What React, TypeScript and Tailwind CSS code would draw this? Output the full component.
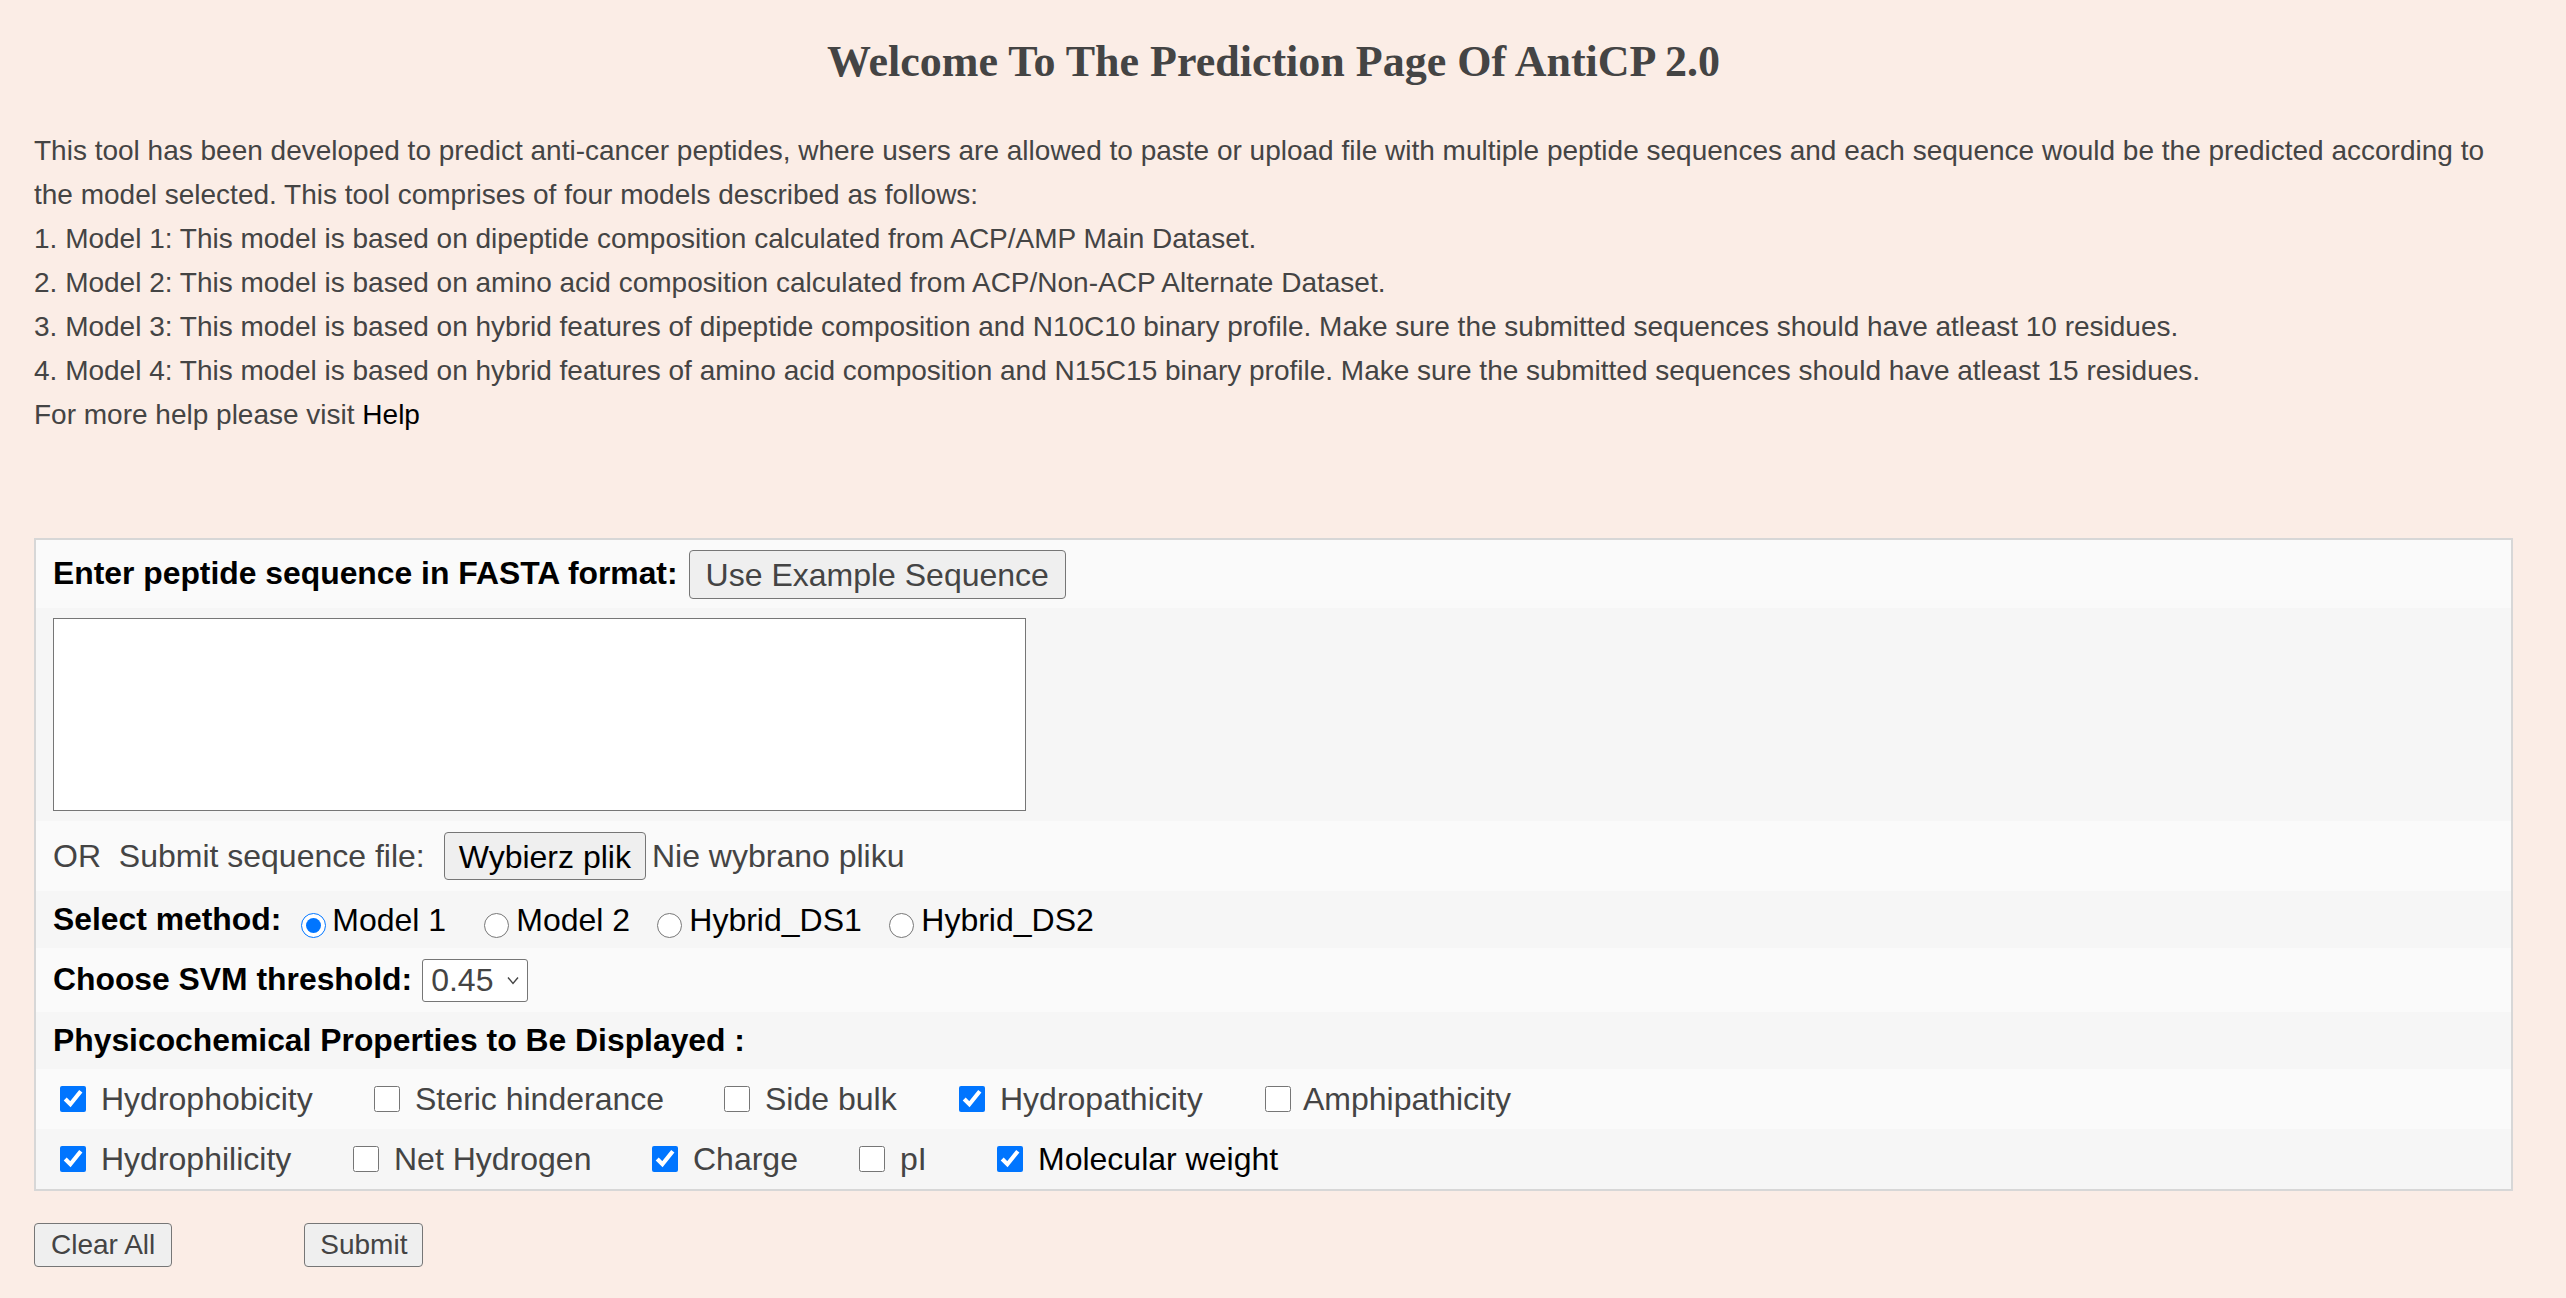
import React from "react";

const sans = "font-['Liberation_Sans',Arial,Helvetica,sans-serif]";

function Radio({ label, checked, width, gap }: { label: string; checked?: boolean; width?: string; gap: string }) {
  return (
    <label className={`flex items-center ${width ?? ""}`}>
      <input type="radio" name="method" defaultChecked={checked} className="mt-[12px] h-[25px] w-[25px] shrink-0" />
      <span className={`${gap} text-black`}>{label}</span>
    </label>
  );
}

function Check({
  label,
  checked,
  width,
  black,
  gap = "ml-[15px]",
}: {
  label: string;
  checked?: boolean;
  width?: string;
  black?: boolean;
  gap?: string;
}) {
  return (
    <label className={`flex items-center ${width ?? ""}`}>
      <input type="checkbox" defaultChecked={checked} className="h-[26px] w-[26px] shrink-0" />
      <span className={`${gap} ${black ? "text-black" : "text-[#444]"}`}>{label}</span>
    </label>
  );
}

export default function App() {
  return (
    <div className={`min-h-screen w-full bg-[#fbede6] ${sans} text-[#444]`}>
      <div className="pl-[34px] pr-[53px] pb-[31px]">
        <h1 className="pt-[37px] text-center font-['Liberation_Serif','Times_New_Roman',serif] text-[44px] font-bold leading-[50px] text-[#444]">
          Welcome To The Prediction Page Of AntiCP 2.0
        </h1>
        <p className="mt-[41.5px] text-[28px] leading-[44px]">
          This tool has been developed to predict anti-cancer peptides, where users are allowed to paste or upload file with multiple peptide sequences and each sequence would be the predicted according to the model selected. This tool comprises of four models described as follows:
          <br />
          1. Model 1: This model is based on dipeptide composition calculated from ACP/AMP Main Dataset.
          <br />
          2. Model 2: This model is based on amino acid composition calculated from ACP/Non-ACP Alternate Dataset.
          <br />
          3. Model 3: This model is based on hybrid features of dipeptide composition and N10C10 binary profile. Make sure the submitted sequences should have atleast 10 residues.
          <br />
          4. Model 4: This model is based on hybrid features of amino acid composition and N15C15 binary profile. Make sure the submitted sequences should have atleast 15 residues.
          <br />
          For more help please visit <a className="text-black">Help</a>
        </p>

        <div className="mt-[101.5px] border-2 border-[#d7d7d7] text-[32px]">
          <div className="flex h-[68px] items-center bg-[#fafafa] px-[17px]">
            <span className="text-[31.85px] font-bold text-black">Enter peptide sequence in FASTA format:</span>
            <button className="ml-[11px] h-[49px] rounded-[4px] border border-[#767676] bg-[#efefef] px-4 text-[#444]">
              Use Example Sequence
            </button>
          </div>
          <div className="flex h-[213px] items-center bg-[#f6f6f6] px-[17px]">
            <textarea className="h-[193px] w-[973px] resize-none border border-[#767676] bg-white" />
          </div>
          <div className="flex h-[70px] items-center bg-[#fafafa] px-[17px]">
            <span className="text-[#444]">OR&nbsp;&nbsp;Submit sequence file:</span>
            <button className="ml-[19px] h-[48px] rounded-[4px] border border-[#767676] bg-[#efefef] px-[14px] text-black">
              Wybierz plik
            </button>
            <span className="ml-[6px] text-[#444]">Nie wybrano pliku</span>
          </div>
          <div className="flex h-[57px] items-center bg-[#f6f6f6] px-[17px]">
            <span className="text-[31.85px] font-bold text-black">Select method:</span>
            <div className="ml-[20px] flex items-center">
              <Radio label="Model 1" checked width="w-[183px]" gap="ml-[6px]" />
              <Radio label="Model 2" width="w-[173px]" gap="ml-[7px]" />
              <Radio label="Hybrid_DS1" width="w-[232px]" gap="ml-[7px]" />
              <Radio label="Hybrid_DS2" gap="ml-[7px]" />
            </div>
          </div>
          <div className="flex h-[64px] items-center bg-[#fafafa] px-[17px]">
            <span className="text-[31.85px] font-bold text-black">Choose SVM threshold:</span>
            <div className="ml-[10px] flex h-[43px] w-[106px] items-center justify-between rounded-[3px] border border-[#767676] bg-white pl-[8px] pr-[8px] text-[#444]">
              <span>0.45</span>
              <svg width="12" height="9" viewBox="0 0 12 9" fill="none">
                <path d="M1 1.5 L6 7.5 L11 1.5" stroke="#444" strokeWidth="1.4" />
              </svg>
            </div>
          </div>
          <div className="flex h-[57px] items-center bg-[#f6f6f6] px-[17px]">
            <span className="text-[31.85px] font-bold text-black">Physicochemical Properties to Be Displayed :</span>
          </div>
          <div className="flex h-[60px] items-center bg-[#fafafa] pl-[24px] pr-[17px]">
            <Check label="Hydrophobicity" checked width="w-[314px]" />
            <Check label="Steric hinderance" width="w-[350px]" />
            <Check label="Side bulk" width="w-[235px]" />
            <Check label="Hydropathicity" checked width="w-[306px]" />
            <Check label="Amphipathicity" gap="ml-[12px]" />
          </div>
          <div className="flex h-[60px] items-center bg-[#f6f6f6] pl-[24px] pr-[17px]">
            <Check label="Hydrophilicity" checked width="w-[293px]" />
            <Check label="Net Hydrogen" width="w-[299px]" />
            <Check label="Charge" checked width="w-[207px]" />
            <Check label="pI" width="w-[138px]" />
            <Check label="Molecular weight" checked black />
          </div>
        </div>

        <div className="mt-[32px] flex text-[28px]">
          <button className="h-[44px] rounded-[4px] border border-[#767676] bg-[#efefef] px-4 text-[#444]">Clear All</button>
          <button className="ml-[132px] h-[44px] rounded-[4px] border border-[#767676] bg-[#efefef] px-[15px] text-[#444]">Submit</button>
        </div>
      </div>
    </div>
  );
}
